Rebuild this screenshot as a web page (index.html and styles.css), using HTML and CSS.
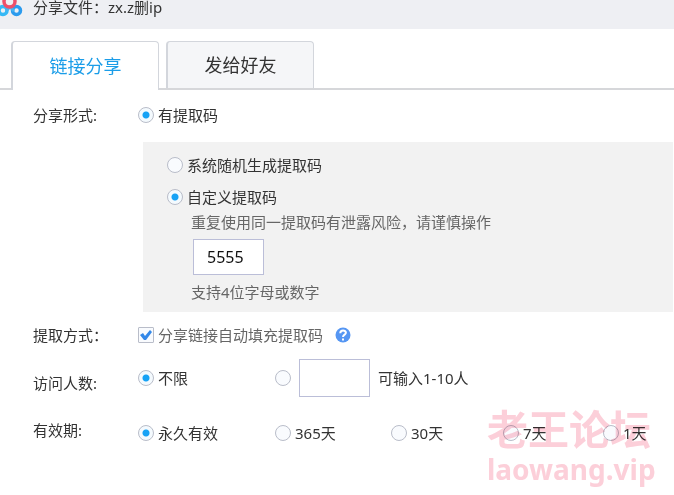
FILE: index.html
```html
<!DOCTYPE html>
<html lang="zh-CN">
<head>
<meta charset="utf-8">
<meta name="viewport" content="width=device-width, initial-scale=1">
<title>分享文件</title>
<link rel="stylesheet" href="styles.css">
</head>
<body>
<header class="titlebar">
  <svg class="logo" viewBox="0 0 24 18" aria-hidden="true">
    <circle cx="3" cy="10.500" r="4" fill="none" stroke="#35b8f5" stroke-width="3.500"/>
    <circle cx="16.500" cy="10.500" r="4" fill="none" stroke="#2b9bee" stroke-width="3.500"/>
    <path d="M6 11L10 7l4 4" fill="none" stroke="#45b4f2" stroke-width="3"/>
    <circle cx="9.500" cy="1.500" r="5.500" fill="none" stroke="#ee4f69" stroke-width="3.500"/>
  </svg>
  <h1 class="title">分享文件：zx.z删ip</h1>
</header>
<nav class="tabs">
  <button class="tab tab-active" type="button">链接分享</button>
  <button class="tab" type="button">发给好友</button>
</nav>
<form class="form">
  <div class="row">
    <span class="label">分享形式:</span>
    <label class="choice"><input type="radio" name="form" checked>有提取码</label>
  </div>
  <section class="panel">
    <label class="choice"><input type="radio" name="code">系统随机生成提取码</label>
    <label class="choice"><input type="radio" name="code" checked>自定义提取码</label>
    <div class="custom">
      <p class="hint">重复使用同一提取码有泄露风险，请谨慎操作</p>
      <input class="field" type="text" value="5555" maxlength="4" aria-label="提取码">
      <p class="hint">支持4位字母或数字</p>
    </div>
  </section>
  <div class="row">
    <span class="label">提取方式：</span>
    <label class="choice muted"><input type="checkbox" checked>分享链接自动填充提取码</label>
    <button class="help" type="button" aria-label="帮助">
      <svg viewBox="0 0 16 16" aria-hidden="true"><circle cx="8" cy="8" r="7.500" fill="#5596f3"/><path d="M5.300 6.200c0-3.600 5.600-3.300 5.600-.4C10.900 7.600 8 7.600 8 10" fill="none" stroke="#fff" stroke-width="2"/><path d="M7 11.500h2v2H7z" fill="#fff"/></svg>
    </button>
  </div>
  <div class="row row-visitors">
    <span class="label">访问人数:</span>
    <div class="options">
      <label class="choice"><input type="radio" name="visitors" checked>不限</label>
      <div class="amount">
        <input type="radio" name="visitors" aria-label="限制人数">
        <input class="field" id="count" type="text">
        <label for="count">可输入1-10人</label>
      </div>
    </div>
  </div>
  <div class="row row-period">
    <span class="label">有效期:</span>
    <div class="options">
      <label class="choice"><input type="radio" name="period" checked>永久有效</label>
      <label class="choice"><input type="radio" name="period">365天</label>
      <label class="choice"><input type="radio" name="period">30天</label>
      <label class="choice"><input type="radio" name="period">7天</label>
      <label class="choice"><input type="radio" name="period">1天</label>
    </div>
  </div>
</form>
<div class="watermark"><span class="mark-name">老王论坛</span><span class="mark-site">laowang.vip</span></div>
</body>
</html>
```
FILE: styles.css
```css
* {
  box-sizing: border-box;
}

body {
  position: relative;
  margin: 0;
  min-height: 100vh;
  background: #fff;
  color: #333;
  font: 15px/24px "Noto Sans", "Noto Sans CJK SC", sans-serif;
}

button,
input {
  font: inherit;
  color: inherit;
}

.titlebar {
  display: flex;
  height: 29px;
  background: #eeeff3;
}

.logo {
  width: 24px;
  height: 18px;
}

.title {
  margin: 0 0 0 9px;
  font-size: 15px;
  font-weight: 400;
  line-height: 14px;
}

.tabs {
  display: flex;
  gap: 7px;
  margin-top: 12px;
  padding: 0 11px;
  border-bottom: 2px solid #d6d7da;
}

.tab {
  width: 148px;
  height: 47px;
  padding: 0;
  border: 1px solid #d3d6dc;
  border-left-width: 2px;
  border-bottom: 0;
  border-radius: 4px 4px 0 0;
  background: #f5f6f8;
  font-size: 18px;
}

.tab-active {
  height: 49px;
  margin-bottom: -2px;
  background: #fff;
  color: #1b9de8;
}

.form {
  padding: 11px 1px 0 33px;
}

.row {
  display: flex;
  align-items: center;
}

.label {
  flex: none;
  width: 105px;
  line-height: 28px;
}

.choice {
  display: flex;
  align-items: center;
  gap: 4px;
}

input[type="radio"],
input[type="checkbox"] {
  appearance: none;
  flex: none;
  width: 16px;
  height: 16px;
  margin: 0;
  border: 1px solid #b9bdc9;
  border-radius: 50%;
  background: #f9fbfe;
}

input[type="radio"]:checked {
  background: radial-gradient(circle, #16a2f5 3px, #f4fafe 4px);
}

input[type="checkbox"] {
  border-radius: 1px;
}

input[type="checkbox"]:checked::before {
  content: "";
  display: block;
  width: 14px;
  height: 14px;
  background: #3388e8;
  clip-path: polygon(1px 7px, 4px 5px, 6px 8px, 11px 2px, 13px 4px, 7px 12px, 5px 12px);
}

.panel {
  display: flex;
  flex-direction: column;
  gap: 8px;
  margin: 13px 0 9px 110px;
  padding: 11px 24px 8px;
  background: #f2f2f2;
}

.custom {
  margin: -7px 0 0 24px;
}

.hint {
  margin: 0;
  color: #666;
}

.field {
  display: block;
  width: 71px;
  height: 36px;
  padding: 0 13px;
  border: 1px solid #bbbed8;
  border-radius: 0;
  background: #fff;
  color: #111;
  font-size: 16px;
}

.custom .field {
  margin: 5px 0 5px 2px;
}

.muted {
  color: #666;
}

.help {
  display: flex;
  margin-left: 12px;
  padding: 0;
  border: 0;
  background: none;
}

.help svg {
  width: 16px;
  height: 16px;
}

.row-visitors {
  align-items: flex-end;
  margin-top: 10px;
}

.row-period {
  align-items: flex-start;
  margin-top: 19px;
}

.options {
  display: grid;
  grid-template-columns: 137px 116px 112px 100px auto;
  align-items: center;
}

.row-period .options {
  padding-top: 5px;
}

.amount {
  display: flex;
  grid-column: 2 / -1;
  align-items: center;
  gap: 8px;
}

.amount .field {
  height: 38px;
}

.watermark {
  position: absolute;
  top: 405px;
  right: 19px;
  display: flex;
  flex-direction: column;
  width: 168px;
  color: #fccfd9;
  font-weight: 700;
  mix-blend-mode: multiply;
  pointer-events: none;
}

.mark-name {
  font-size: 41px;
  line-height: 48px;
}

.mark-site {
  font-size: 28px;
  line-height: 32px;
}
```
